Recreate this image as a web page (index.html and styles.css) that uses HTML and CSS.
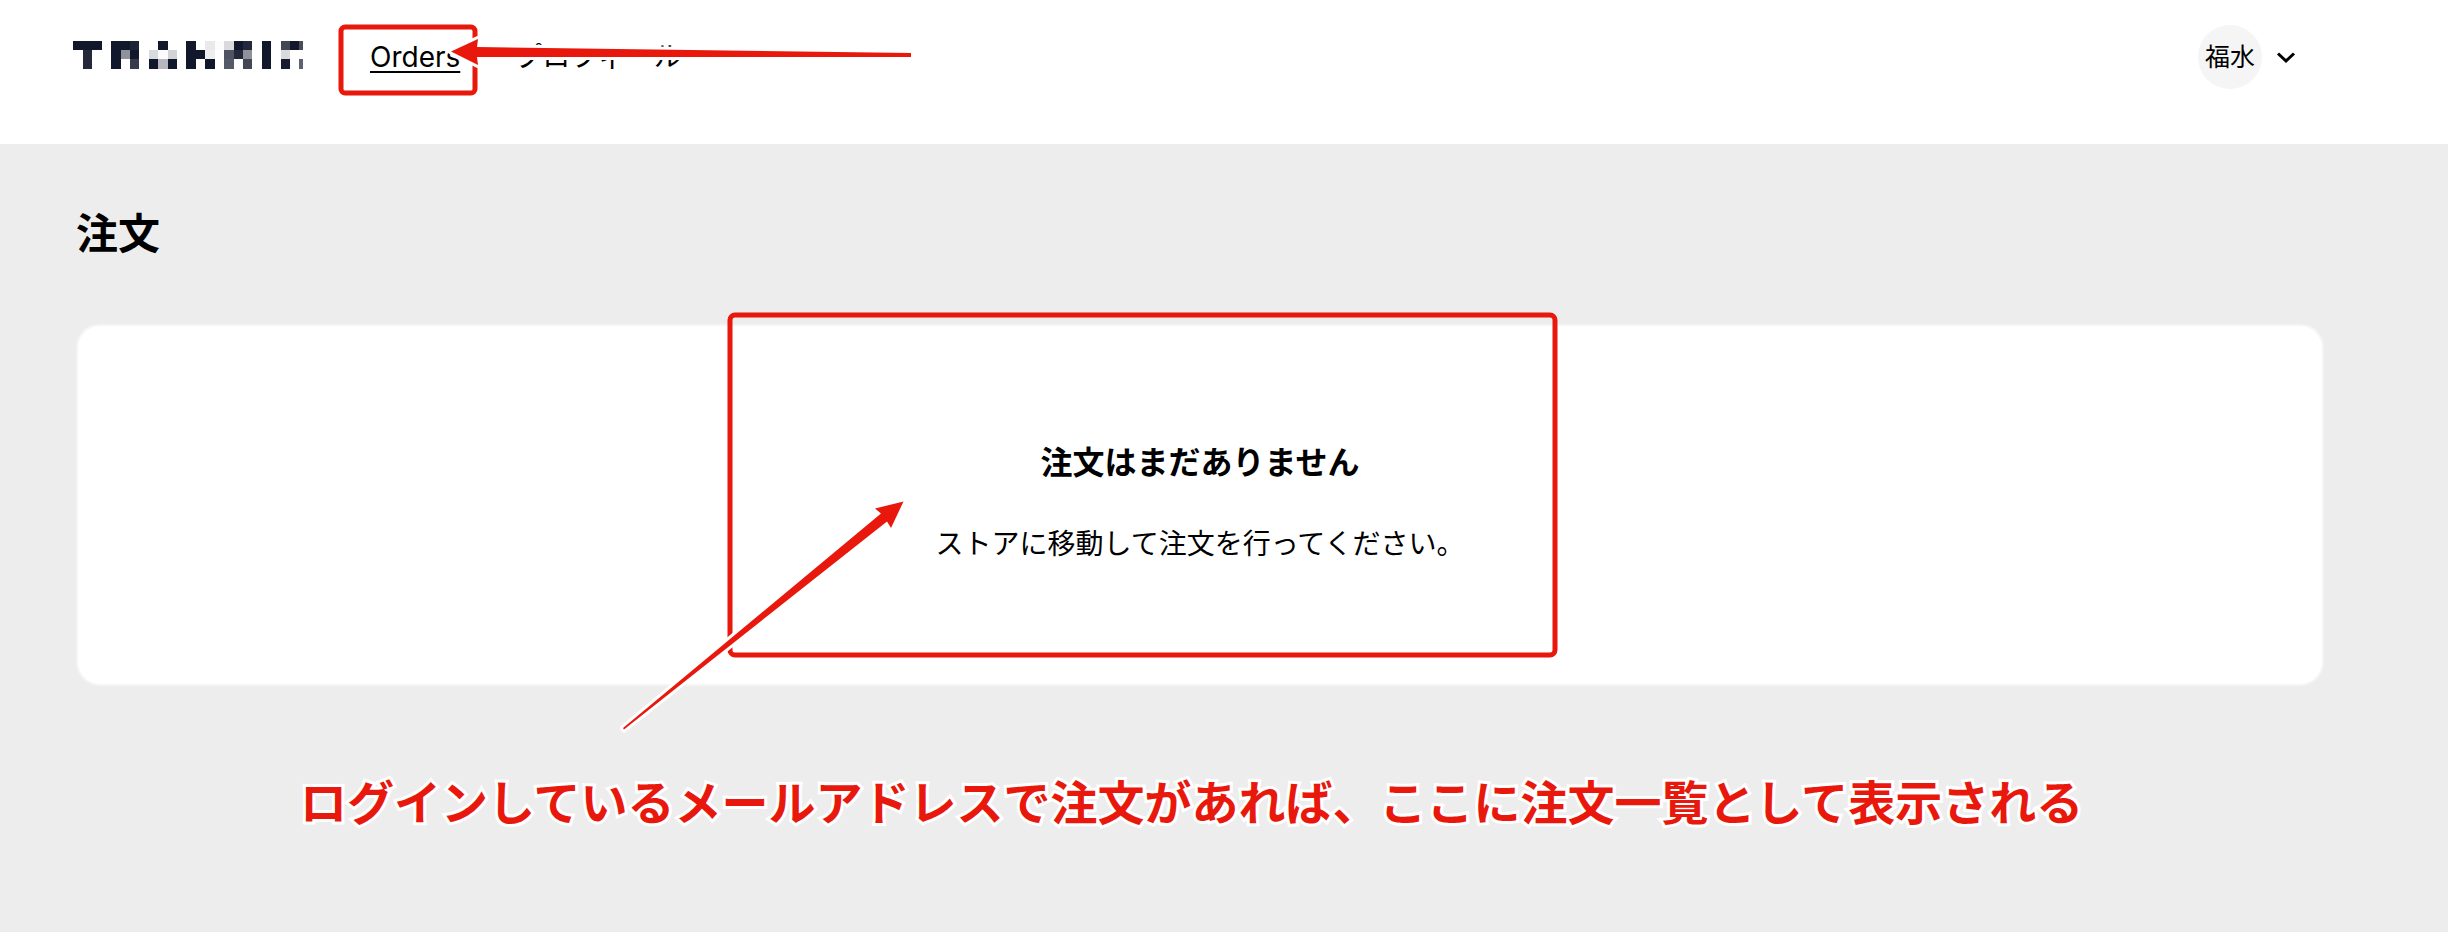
FILE: index.html
```html
<!DOCTYPE html>
<html lang="ja">
<head>
    <meta charset="utf-8">
    <title>注文</title>
    <link rel="stylesheet" href="styles.css">
</head>
<body>
    <header class="header">
        <a href="#" class="logo" aria-label="Store">
            <svg width="230" height="28" viewBox="0 0 230 28" shape-rendering="crispEdges">
                <g fill="#12182b">
                    <path d="M0 0h29v9H0z"/>
                    <path d="M38 0h19v9H48v19H38z"/>
                    <path d="M85 0h10v9H85z"/>
                    <path d="M76 18h9v10h-9zM95 18h9v10h-9z"/>
                    <path d="M113 0h10v9h9v9h-9v10h-10zM132 18h10v10h-10z"/>
                    <path d="M161 0h9v9h-9z"/>
                    <path d="M189 0h9v28h-9z"/>
                    <path d="M217 0h9v9h-9zM57 9h9v9h-9z"/>
                </g>
                <path fill="#23283a" d="M10 9h9v19h-9z"/>
                <path fill="#1e2335" d="M57 0h9v9h-9z"/>
                <path fill="#8f929b" d="M48 9h9v9h-9zM170 9h9v9h-9z"/>
                <path fill="#363a49" d="M57 18h9v10h-9z"/>
                <path fill="#d9dade" d="M76 9h9v9h-9zM151 0h10v9h-10zM208 9h9v9h-9z"/>
                <path fill="#fcfcfc" d="M85 9h10v9H85zM142 0h9v9h-9z"/>
                <path fill="#d2d3d6" d="M95 9h9v9h-9z"/>
                <path fill="#b6b8bd" d="M85 18h10v10H85z"/>
                <path fill="#e9e9eb" d="M132 0h10v9h-10z"/>
                <path fill="#edeef0" d="M132 9h10v9h-10z"/>
                <path fill="#505361" d="M151 9h10v9h-10z"/>
                <path fill="#23283a" d="M161 9h9v9h-9zM170 0h9v9h-9z"/>
                <path fill="#555a68" d="M151 18h10v10h-10z"/>
                <path fill="#434752" d="M170 18h9v10h-9zM208 0h9v9h-9z"/>
                <path fill="#171c2e" d="M208 18h9v10h-9z"/>
                <path fill="#4a4d59" d="M226 0h4v9h-4z"/>
                <path fill="#5e6270" d="M226 18h4v10h-4z"/>
            </svg>
        </a>
        <nav class="nav">
            <a href="#" class="nav-link active">Orders</a>
            <a href="#" class="nav-link">プロフィール</a>
            <svg class="note-nav" width="580" height="80" viewBox="0 0 580 80">
                <rect class="note-box" x="6" y="7" width="134" height="66" rx="4"/>
                <path class="note-arrow" d="M116 31.5L143 19L142 27L576 33V37L142 37L143 45Z"/>
            </svg>
        </nav>
        <button type="button" class="account" aria-label="福水">
            <span class="avatar">福水</span>
            <svg width="24" height="24" viewBox="0 0 24 24" fill="none" stroke="#000" stroke-width="3">
                <path d="M4 8.5l8 7.5l8-7.5"/>
            </svg>
        </button>
    </header>

    <main class="main">
        <h1>注文</h1>
        <section class="card">
            <h2>注文はまだありません</h2>
            <p>ストアに移動して注文を行ってください。</p>
            <svg class="note-card" width="940" height="424" viewBox="0 0 940 424">
                <rect class="note-box" x="110" y="5" width="825" height="340" rx="5"/>
                <path class="note-arrow" d="M283.5 191.5L271 218L267 211.500L4 419.500L3 418L261 203.500L255 198.500Z"/>
            </svg>
        </section>
        <p class="note-text">ログインしているメールアドレスで注文があれば、ここに注文一覧として表示される</p>
    </main>
</body>
</html>
```

FILE: styles.css
```css
* { box-sizing: border-box; }
body {
    margin: 0;
    background-color: #ededed;
    color: #000;
    font-family: Inter, "Noto Sans CJK JP", sans-serif;
    font-size: 28px;
    line-height: 40px;
}
h1, h2, p { margin: 0; }
svg { display: block; }

.header {
    display: flex;
    align-items: center;
    padding: 25px 126px 55px 73px;
    background-color: #fff;
}
.logo { padding-bottom: 4px; }
.nav {
    position: relative;
    display: flex;
    gap: 54px;
    margin-left: 67px;
}
.nav-link { color: #000; text-decoration: none; }
.active {
    text-decoration: underline;
    text-decoration-thickness: 2px;
    text-underline-offset: 4px;
}
.account {
    display: flex;
    align-items: center;
    gap: 12px;
    margin-left: auto;
    padding: 0 24px 0 0;
    border: none;
    background: none;
    color: #000;
    font: inherit;
    cursor: pointer;
}
.avatar {
    display: flex;
    align-items: center;
    justify-content: center;
    width: 64px;
    height: 64px;
    border-radius: 50%;
    background-color: #f5f5f5;
    font-size: 25px;
}

.main { padding: 60px 124px 80px 76px; }
h1 {
    font-size: 42px;
    line-height: 60px;
    font-weight: 700;
}
.card {
    position: relative;
    margin-top: 60px;
    padding: 112px 32px 120px;
    border: 2px solid #f5f5f5;
    border-radius: 24px;
    background-color: #fff;
    text-align: center;
}
h2 {
    margin-bottom: 36px;
    font-size: 32px;
    line-height: 50px;
    font-weight: 700;
}

/* red callouts */
.note-nav {
    position: absolute;
    top: -17px;
    left: -35px;
    pointer-events: none;
}
.note-card {
    position: absolute;
    top: -16px;
    left: calc(50% - 580px);
    pointer-events: none;
}
.note-box {
    fill: none;
    stroke: #e8190c;
    stroke-width: 5px;
}
.note-arrow {
    fill: #e8190c;
    stroke: #fff;
    stroke-width: 6px;
    stroke-linejoin: round;
    paint-order: stroke;
}
.note-text {
    margin-top: 82px;
    padding-left: 224px;
    color: #e8190c;
    font-size: 47px;
    line-height: 70px;
    font-weight: 700;
    -webkit-text-stroke: 6px #fff;
    paint-order: stroke;
}
```
